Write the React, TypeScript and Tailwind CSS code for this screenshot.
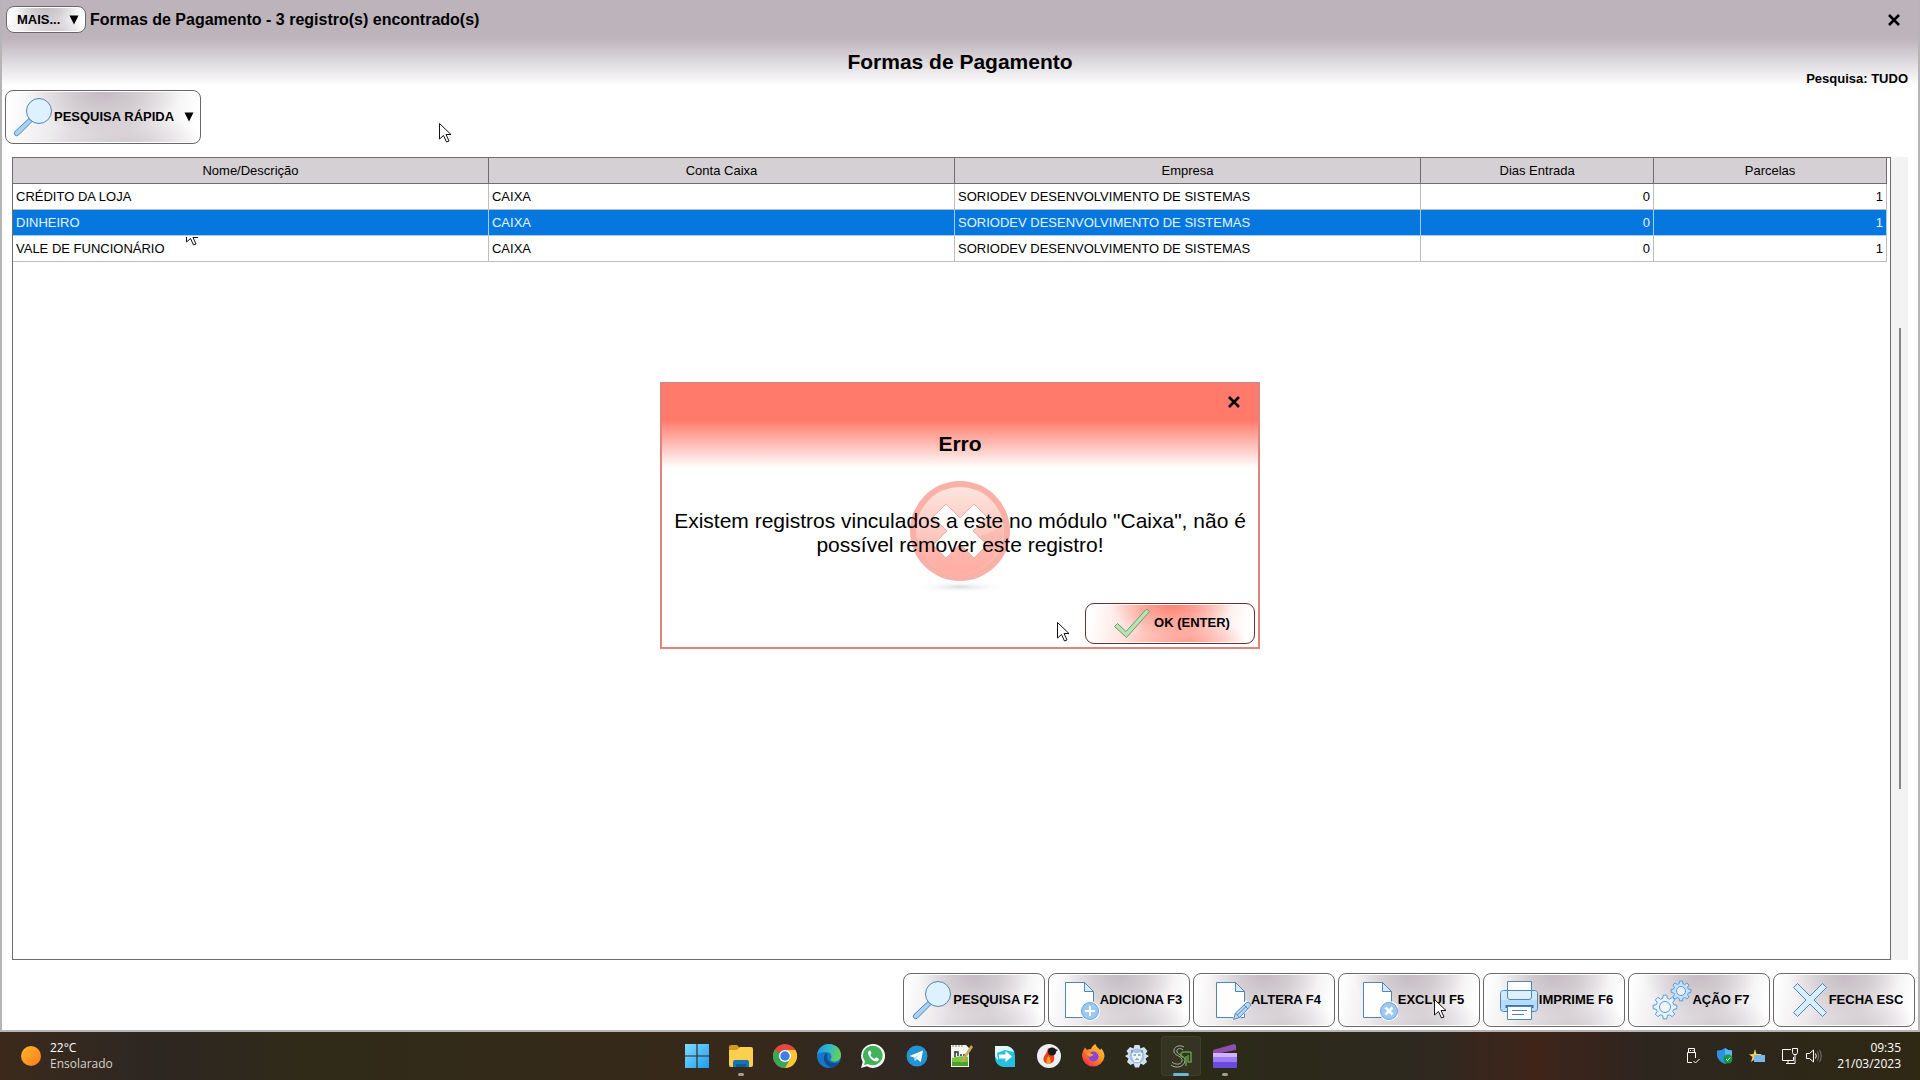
import type { ReactNode } from 'react'
import clsx from 'clsx'

const columns = [
  { label: 'Nome/Descrição', width: 'w-[25.4%]' },
  { label: 'Conta Caixa', width: 'w-[24.87%]' },
  { label: 'Empresa', width: 'w-[24.87%]' },
  { label: 'Dias Entrada', width: 'w-[12.43%]' },
  { label: 'Parcelas', width: 'w-[12.43%]' },
]

const rows = [
  { nome: 'CRÉDITO DA LOJA', conta: 'CAIXA', empresa: 'SORIODEV DESENVOLVIMENTO DE SISTEMAS', dias: 0, parcelas: 1 },
  { nome: 'DINHEIRO', conta: 'CAIXA', empresa: 'SORIODEV DESENVOLVIMENTO DE SISTEMAS', dias: 0, parcelas: 1, selected: true },
  { nome: 'VALE DE FUNCIONÁRIO', conta: 'CAIXA', empresa: 'SORIODEV DESENVOLVIMENTO DE SISTEMAS', dias: 0, parcelas: 1 },
]

const grayButton =
  'border border-[#6b666a] bg-white bg-[radial-gradient(ellipse_40%_85%_at_50%_0%,#c3bbc1,transparent),radial-gradient(ellipse_40%_60%_at_62%_100%,#d3cdd2,transparent),linear-gradient(100deg,#ffffff_2%,#e6e2e5_35%,#e3dfe2_62%,#ffffff_96%)] shadow-[inset_0_0_0_1px_#ffffff]'

// Closed outline of a gear: eight teeth around (cx, cy)
function gearPath(cx: number, cy: number, outer: number, inner: number) {
  const points: string[] = []
  const teeth = 8
  for (let i = 0; i < teeth; i++) {
    const base = (i / teeth) * Math.PI * 2
    const steps = [
      [-0.26, inner],
      [-0.15, outer],
      [0.15, outer],
      [0.26, inner],
    ]
    steps.forEach(([offset, r]) => {
      const a = base + offset
      points.push(`${(cx + Math.cos(a) * r).toFixed(2)} ${(cy + Math.sin(a) * r).toFixed(2)}`)
    })
  }
  return `M${points.join('L')}Z`
}

/* ---------- Toolbar icons ---------- */

function Icon({ children }: { children: ReactNode }) {
  return (
    <svg viewBox="0 0 44 44" className="size-11 shrink-0" fill="none" stroke="#4f86b8" strokeWidth="1" aria-hidden="true">
      {children}
    </svg>
  )
}

function SearchIcon() {
  return (
    <Icon>
      <path d="M19 23.500L22 26.500L8.500 40Q6.500 41.500 5 40Q3.500 38.500 5 36.500Z" fill="#a9d0f5" />
      <circle cx="29" cy="16" r="12.500" fill="#def1ff" />
    </Icon>
  )
}

function Sheet() {
  return (
    <>
      <path d="M9.500 4.500H28.500L37.500 13.500V39.500H9.500Z" fill="#fff" />
      <path d="M28.500 4.500V13.500H37.500Z" fill="#d5ebff" />
    </>
  )
}

function AddIcon() {
  return (
    <Icon>
      <Sheet />
      <circle cx="34" cy="33" r="10" fill="#fff" stroke="none" />
      <circle cx="34" cy="33" r="8.500" fill="#9cc8f4" stroke="#6ba3dc" />
      <path d="M34 28V38M29 33H39" stroke="#fff" strokeWidth="2" />
    </Icon>
  )
}

function EditIcon() {
  return (
    <Icon>
      <Sheet />
      <path d="M25 43L28 34L39 22L45 28L33 40Z" fill="#fff" stroke="none" />
      <path d="M26.500 41.500L28.500 35L39.500 24.500Q41.500 23.500 43 25.500Q44 27 43 28.500L32.500 39.500Z" fill="#b5d9fb" />
      <path d="M28.500 35L32.500 39.500M37 27L41 31M30.500 37L39.500 28" />
    </Icon>
  )
}

function DeleteIcon() {
  return (
    <Icon>
      <Sheet />
      <circle cx="35" cy="33" r="10" fill="#fff" stroke="none" />
      <circle cx="35" cy="33" r="8.500" fill="#9cc8f4" stroke="#6ba3dc" />
      <path d="M31.500 29.500L38.500 36.500M38.500 29.500L31.500 36.500" stroke="#fff" strokeWidth="2.500" />
    </Icon>
  )
}

function PrintIcon() {
  return (
    <Icon>
      <path d="M12.500 3.500H36.500V14H12.500Z" fill="#fff" />
      <rect x="5.500" y="12.500" width="37" height="21" rx="3" fill="#b7dcfb" />
      <path d="M6 15Q6 13 8.500 13H39.500Q42 13 42 15V22H6Z" fill="#cfe8fd" stroke="none" />
      <path d="M12.500 12.500H36.500V19Q36.500 21.500 34 21.500H15Q12.500 21.500 12.500 19Z" fill="#dff1ff" />
      <path d="M10.500 28.500H38.500" stroke="#3d74a8" strokeWidth="3" />
      <path d="M12.500 28.500H36.500V41.500H12.500Z" fill="#fff" />
      <path d="M17 32.500H32M17 36.500H29" />
    </Icon>
  )
}

function GearsIcon() {
  return (
    <Icon>
      <path d={gearPath(17, 29, 12, 9)} fill="#e3f3ff" stroke="#5a9bd5" />
      <circle cx="17" cy="29" r="5.500" fill="#f3f3f6" stroke="#5a9bd5" />
      <path d={gearPath(33, 13, 10, 7.5)} fill="#c4e2fb" stroke="#5a9bd5" />
      <circle cx="33" cy="13" r="4.500" fill="#eeedf1" stroke="#5a9bd5" />
    </Icon>
  )
}

function CloseIcon() {
  return (
    <Icon>
      <path
        d="M12.500 5.500L25 18L37.500 5.500L41.500 9.500L29 22L41.500 34.500L37.500 38.500L25 26L12.500 38.500L8.500 34.500L21 22L8.500 9.500Z"
        fill="#d9efff"
      />
    </Icon>
  )
}

function CheckIcon() {
  return (
    <Icon>
      <path d="M4.500 25.500L7.500 22.500L16 30.500L36 8.500Q38 8 39.500 10.500L16.500 36.500Z" fill="#b9e3b5" stroke="#6d9a6d" />
    </Icon>
  )
}

function CrossMark() {
  return (
    <svg viewBox="0 0 12 12" className="size-3" fill="none" stroke="#000" strokeWidth="2.500" aria-hidden="true">
      <path d="M1 1L11 11M11 1L1 11" />
    </svg>
  )
}

function Caret() {
  return (
    <svg viewBox="0 0 10 10" className="size-2.5 shrink-0" aria-hidden="true">
      <path d="M.5 .5H9.500L5 9.500Z" fill="#000" />
    </svg>
  )
}

function Pointer({ className }: { className: string }) {
  return (
    <svg viewBox="0 0 13 20" className={clsx('pointer-events-none absolute h-5 w-[13px]', className)} aria-hidden="true">
      <path d="M.5 .5V16L4.500 12.500L7.500 19L10 18L7 11.500H12Z" fill="#fff" stroke="#111" />
    </svg>
  )
}

const actions = [
  { label: 'PESQUISA F2', icon: <SearchIcon /> },
  { label: 'ADICIONA F3', icon: <AddIcon /> },
  { label: 'ALTERA F4', icon: <EditIcon /> },
  { label: 'EXCLUI F5', icon: <DeleteIcon /> },
  { label: 'IMPRIME F6', icon: <PrintIcon /> },
  { label: 'AÇÃO F7', icon: <GearsIcon /> },
  { label: 'FECHA ESC', icon: <CloseIcon /> },
]

/* ---------- Taskbar icons ---------- */

const taskbarApps = [
  {
    name: 'Iniciar',
    art: (
      <>
        <linearGradient id="win" x1="0" y1="0" x2="1" y2="1">
          <stop offset="0" stopColor="#7fdcff" />
          <stop offset="1" stopColor="#1b9df0" />
        </linearGradient>
        <path d="M0 0H11.400V11.400H0ZM12.600 0H24V11.400H12.600ZM0 12.600H11.400V24H0ZM12.600 12.600H24V24H12.600Z" fill="url(#win)" />
      </>
    ),
  },
  {
    name: 'Explorador de Arquivos',
    running: true,
    art: (
      <>
        <path d="M0 3Q0 1 2 1H8L11 4H22V8H0Z" fill="#d99a1b" />
        <path d="M0 6H8L11 3H22Q24 3 24 5V21Q24 23 22 23H2Q0 23 0 21Z" fill="#fbd04f" />
        <path d="M4 23V18Q4 16 6 16H18Q20 16 20 18V23Z" fill="#1673b8" />
        <path d="M7 23V20H17V23Z" fill="#0f5a94" />
      </>
    ),
  },
  {
    name: 'Chrome',
    art: (
      <>
        <circle cx="12" cy="12" r="12" fill="#e24a3b" />
        <path d="M12 12L1.600 6A12 12 0 0 0 12 24L17.200 15Z" fill="#3aa757" />
        <path d="M12 24A12 12 0 0 0 22.400 6H12L17.200 15Z" fill="#fbc72e" />
        <circle cx="12" cy="12" r="6" fill="#fff" />
        <circle cx="12" cy="12" r="4.700" fill="#3f7de8" />
      </>
    ),
  },
  {
    name: 'Edge',
    art: (
      <>
        <linearGradient id="edge" x1="0" y1="0" x2="1" y2="0.3">
          <stop offset="0" stopColor="#1e8fdc" />
          <stop offset="0.5" stopColor="#2fb7cf" />
          <stop offset="1" stopColor="#63cf5c" />
        </linearGradient>
        <circle cx="12" cy="12" r="12" fill="#1777c8" />
        <path d="M0 11C1 4 6 0 12 0C19 0 24 5 24 11C24 15 21 17.500 17.500 17.500C14 17.500 13 16 14 14.500C16 11.500 13 8 9 8C5 8 1 9 0 11Z" fill="url(#edge)" />
        <path d="M8.500 9.500C5 13 7 21 14 23.500C18 23.500 21 21 22.500 18C17 21 10 18 10 13Q10 11 11 9.500Z" fill="#124c8c" />
      </>
    ),
  },
  {
    name: 'WhatsApp',
    art: (
      <>
        <path d="M0 24L1.700 18A12 12 0 1 1 6 22.300Z" fill="#f4f8f4" />
        <path d="M3 21L4 17.400A9.800 9.800 0 1 1 7 20Z" fill="#41b25b" />
        <path d="M8.500 6.500C7 7 6.500 9 7.500 11C9 14.500 12 17 15 17.500C17 17.500 18 16 17.800 14.700L15 13.300L13.500 15C11.500 14 10 12.500 9.300 10.800L10.500 9.500L9.500 6.700Z" fill="#fff" />
      </>
    ),
  },
  {
    name: 'Telegram',
    art: (
      <>
        <circle cx="12" cy="12" r="10.500" fill="#2494d4" />
        <path d="M4.500 12L18 6.500L15.800 18L11.800 15L9.800 17L9.500 13.800Z" fill="#fff" />
        <path d="M9.500 13.800L15.500 9.500L11 14.500L9.800 17Z" fill="#b7d7ec" />
      </>
    ),
  },
  {
    name: 'Notepad++',
    art: (
      <>
        <path d="M2 1H17L20 4V23H2Z" fill="#f2f4ee" />
        <path d="M3 14Q11 11 19 13V22H3Z" fill="#7cc444" />
        <path d="M3 18H19V22H3Z" fill="#4da02a" />
        <path d="M6 13V7M6 8H9V12M12 10V12M15 10V12" fill="none" stroke="#333" strokeWidth="1.500" />
        <path d="M22 1L24 3L15 17L12 19L13 15Z" fill="#c7a95a" />
        <path d="M4 1V3M7 1V3M10 1V3M13 1V3" stroke="#888" />
      </>
    ),
  },
  {
    name: 'Suporte remoto',
    art: (
      <>
        <path d="M2 2H14Q22 4 22 12V23H10Q2 21 2 13Z" fill="#27c0de" />
        <path d="M2 2H14Q19 3 21 8L12 6L4 9L5 16Q2 14 2 10Z" fill="#dff8fc" />
        <path d="M6 10.500H12.500V7L19 12.500L12.500 18V14.500H6Z" fill="#fff" />
      </>
    ),
  },
  {
    name: 'Gravador',
    art: (
      <>
        <circle cx="12" cy="12" r="12" fill="#eceef0" />
        <path d="M11 4C16 8 18 12 17 16C16 21 7 21 6.500 16C6 12 10 10 11 4Z" fill="#e8401c" />
        <path d="M11.500 12C14 15 15 20 11.500 20C8.500 20 9 15 11.500 12Z" fill="#ffa31f" />
        <circle cx="15" cy="7.500" r="4" fill="#181818" />
        <path d="M18 5L21 6L18.500 8Z" fill="#181818" />
      </>
    ),
  },
  {
    name: 'Firefox',
    art: (
      <>
        <linearGradient id="fox" x1="1" y1="0" x2="0.2" y2="1">
          <stop offset="0" stopColor="#ffd83d" />
          <stop offset="0.5" stopColor="#ff9126" />
          <stop offset="1" stopColor="#f5264e" />
        </linearGradient>
        <path d="M1 12C1 8 3 5 4 3.500L6 6C7 5 9 5 10 5C11 2 13 1 14.500 0C15 3 18 4 19 6L20.500 4.500C22.500 7 23.500 10 23.500 12.500A11.300 11.300 0 0 1 1 12Z" fill="url(#fox)" />
        <circle cx="12.500" cy="12.500" r="5" fill="#8a45d6" />
        <path d="M5 9C8 8 10 10 12.500 10.500C11.500 12.500 9.500 12 8.500 13Z" fill="#ff9c2b" />
      </>
    ),
  },
  {
    name: 'Banco de dados',
    art: (
      <>
        <path
          d="M9.500 1H14.500L15.500 4.500L19 3L22.500 7L20.500 10L24 12L20.500 14.500L22 18L18.500 21L15.500 19.500L14 23.500H10L8.500 19.500L5.500 21L2 18L3.500 14.500L0 12L3.500 10L1.500 7L5 3L8.500 4.500Z"
          fill="#d3e2f2"
        />
        <circle cx="12" cy="12" r="7.500" fill="#a3c0e0" />
        <path d="M7 7L10 9H14L17 7L17 13L14.500 18H9.500L7 13Z" fill="#eaf2fa" />
        <path d="M8.500 11H11M13 11H15.500M10.500 16L12 14.500L13.500 16M7 6V9M17 6V9" stroke="#3c6292" fill="none" />
      </>
    ),
  },
  {
    name: 'SorioDev',
    active: true,
    art: (
      <>
        <path
          d="M15 3C10 0 4 3 5 8C6 12 14 12 13 17C12 21 6 21 3 18M14 6C11 3 7 5 8 8C9 11 17 12 16 17C15 23 7 25 2 21"
          fill="none"
          stroke="#a9b3a4"
        />
        <path d="M22 8H14C10 10 12 14 15 13M17 12V22M22 8V18H19V11" fill="none" stroke="#5f9c45" strokeWidth="1.500" />
      </>
    ),
  },
  {
    name: 'Clipchamp',
    running: true,
    art: (
      <>
        <path d="M0 6L21 0Q23 0 23 2V6L2 10H0Z" fill="#8b4fae" />
        <path d="M0 9H24V22Q24 24 22 24H2Q0 24 0 22Z" fill="#9b7cf5" />
        <path d="M0 9H24V13H0Z" fill="#d3b1fb" />
        <path d="M0 18H24V22Q24 24 22 24H2Q0 24 0 22Z" fill="#6a4be0" />
      </>
    ),
  },
]

function Taskbar() {
  return (
    <footer className="grid h-12 shrink-0 grid-cols-[1fr_auto_1fr] items-center bg-[linear-gradient(to_right,#3b2a1c_0%,#2d2722_8%,#2f2a19_15%,#37291a_38%,#2f2822_48%,#2b2a17_62%,#2e2920_74%,#3f241a_80%,#2c261f_86%,#2f2813_100%)] font-['Open_Sans','Noto_Sans',sans-serif] text-xs text-white">
      <button type="button" className="ml-[21px] flex items-center gap-[9px] justify-self-start text-left leading-4">
        <span className="size-5 rounded-full bg-linear-to-br from-[#ffb62e] to-[#ff7a16]" />
        <span>
          22°C
          <span className="block text-[#d6d2cc]">Ensolarado</span>
        </span>
      </button>

      <nav className="flex pl-0.5">
        {taskbarApps.map((app) => (
          <button key={app.name} type="button" aria-label={app.name} className="relative flex h-12 w-11 items-center justify-center">
            {app.active && <span className="absolute inset-x-[2px] inset-y-1 rounded border border-white/5 bg-white/5" />}
            <svg viewBox="0 0 24 24" className="relative size-6">
              {app.art}
            </svg>
            {app.running && <span className="absolute bottom-1 h-[3px] w-1.5 rounded-full bg-[#a39d96]" />}
            {app.active && <span className="absolute bottom-1 h-[3px] w-4 rounded-full bg-[#6ab8de]" />}
          </button>
        ))}
      </nav>

      <div className="mr-[19px] flex items-center justify-self-end">
        <svg viewBox="0 0 16 18" className="mr-4 h-[18px] w-4" fill="none" stroke="#fff" aria-hidden="true">
          <path d="M3.500 5.500V1.500H9.500V5.500M5 3.500H6M7.500 3.500H8.500M7 15.500H2.500V5.500H10.500V11M8.500 14L10.500 16L14.500 12" />
        </svg>
        <svg viewBox="0 0 16 18" className="mr-4 h-[18px] w-4" aria-hidden="true">
          <path d="M8 1Q11 3.500 15 3.500V9Q14 14 8 17Q1 14 0 9V3.500Q5 3.500 8 1Z" fill="#2f8fe0" />
          <path d="M8 1Q11 3.500 15 3.500V9H8Z" fill="#58b7f2" />
          <circle cx="11" cy="12" r="4.500" fill="#0f9a3f" />
          <path d="M9 12L10.500 13.500L13.200 10.500" fill="none" stroke="#fff" />
        </svg>
        <svg viewBox="0 0 16 18" className="mr-4 h-[18px] w-4" aria-hidden="true">
          <path d="M6 2L7.500 7L13 7L9 10L9 14L6 12L2 15L3.500 10L0 7.500L4.500 7Z" fill="#f7d257" />
          <path d="M5 8H16V15H5Z" fill="#74b9f0" />
        </svg>
        <svg viewBox="0 0 18 18" className="mr-1.5 size-[18px]" fill="none" stroke="#fff" aria-hidden="true">
          <path d="M10 2.500H1.500V13.500H12.500V10M5 16.500H12M7 14V16M11.500 1.500H16.500V5.500L15.500 7.500H12.500L11.500 5.500ZM14 8V16.500H12" />
        </svg>
        <svg viewBox="0 0 18 18" className="mr-3.5 size-[18px]" fill="none" stroke="#fff" aria-hidden="true">
          <path d="M1.500 6.500H4.500L8.500 3V15L4.500 11.500H1.500ZM10.500 6.500Q12 9 10.500 11.500" />
          <path d="M12.500 4.500Q15 9 12.500 13.500M14.500 3Q18 9 14.500 15" stroke="#7b756d" />
        </svg>
        <button type="button" className="text-right leading-4">
          09:35
          <span className="block">21/03/2023</span>
        </button>
      </div>
    </footer>
  )
}

function ErrorDialog() {
  return (
    <div
      role="alertdialog"
      aria-labelledby="erro-titulo"
      aria-describedby="erro-texto"
      className="pointer-events-auto relative flex h-[267px] w-[600px] flex-col border-2 border-[#e0847d] bg-[linear-gradient(to_bottom,#ff7a6a_0,#ff7a6a_36px,#ffffff_84px)]"
    >
      <button type="button" aria-label="Fechar" className="mt-3 mr-[18px] self-end">
        <CrossMark />
      </button>
      <h2 id="erro-titulo" className="mt-6 text-center text-[21px] leading-6 font-bold">
        Erro
      </h2>

      <svg viewBox="0 0 110 116" className="absolute top-24 left-1/2 h-[116px] w-[110px] -translate-x-1/2" aria-hidden="true">
        <linearGradient id="err-disc" x1="0" y1="0" x2="0" y2="1">
          <stop offset="0" stopColor="#fde4de" />
          <stop offset="0.55" stopColor="#fbc8bf" />
          <stop offset="1" stopColor="#ffb0a7" />
        </linearGradient>
        <radialGradient id="err-shadow">
          <stop offset="0" stopColor="#d9dde0" />
          <stop offset="1" stopColor="#ffffff" stopOpacity="0" />
        </radialGradient>
        <ellipse cx="55" cy="107" rx="50" ry="6" fill="url(#err-shadow)" />
        <circle cx="55" cy="51" r="50" fill="#f8b0a7" />
        <circle cx="55" cy="51" r="44" fill="url(#err-disc)" />
        <path d="M11 58Q55 70 98 46A44 44 0 0 1 11 58Z" fill="#ffa79c" opacity="0.400" />
        <path
          d="M41 24L55 38L69 24L82 37L68 51L82 65L69 78L55 64L41 78L28 65L42 51L28 37Z"
          fill="#fff"
          stroke="#eeb0a8"
        />
      </svg>

      <p id="erro-texto" className="relative mt-[53px] px-2 text-center text-[21px] leading-6">
        Existem registros vinculados a este no módulo "Caixa", não é possível remover este registro!
      </p>

      <button
        type="button"
        className="mt-auto mr-[3px] mb-[3px] flex h-[41px] w-[170px] items-center justify-center self-end rounded-[9px] border border-[#6d2f2a] bg-white bg-[radial-gradient(ellipse_36%_85%_at_51%_0%,#ff7f6e,transparent),radial-gradient(ellipse_36%_70%_at_60%_100%,#ff9d90,transparent),linear-gradient(100deg,#ffffff_4%,#ffd2cc_36%,#ffd2cc_62%,#ffffff_94%)] text-[13px] font-bold shadow-[inset_0_0_0_1px_#ffffff]"
      >
        <CheckIcon />
        OK (ENTER)
      </button>
    </div>
  )
}

export default function App() {
  return (
    <div className="flex min-h-screen flex-col font-['Liberation_Sans',Arial,sans-serif] text-black">
      <main className="relative flex flex-1 flex-col border-x-2 border-b-2 border-[#b7b4b6] bg-[linear-gradient(to_bottom,#bcb3bb_0,#bcb3bb_38px,#ffffff_86px)]">
        {/* Title bar */}
        <header className="flex h-[39px] items-center gap-1 pr-[18px] pl-1">
          <button
            type="button"
            className={clsx('flex h-[27px] w-20 items-center justify-between rounded-lg pr-1.5 pl-2.5 text-[13px] font-bold', grayButton)}
          >
            MAIS...
            <Caret />
          </button>
          <span className="text-base font-bold">Formas de Pagamento - 3 registro(s) encontrado(s)</span>
          <button type="button" aria-label="Fechar" className="ml-auto">
            <CrossMark />
          </button>
        </header>

        <div className="grid h-[49px] grid-cols-[1fr_auto_1fr] px-2.5">
          <h1 className="col-start-2 text-[21px] leading-[46px] font-bold">Formas de Pagamento</h1>
          <p className="self-end justify-self-end text-[13px] leading-[18px] font-bold">Pesquisa: TUDO</p>
        </div>

        <div className="mt-0.5 flex px-[3px]">
          <button
            type="button"
            className={clsx('flex h-[54px] w-[196px] items-center rounded-lg pr-1.5 pl-1 text-[13px] font-bold', grayButton)}
          >
            <SearchIcon />
            PESQUISA RÁPIDA
            <span className="ml-auto">
              <Caret />
            </span>
          </button>
        </div>

        {/* Records */}
        <div className="mx-2.5 mt-[13px] flex flex-1">
          <div className="flex-1 border border-[#6f6d6f] bg-white pr-[3px]">
            <table className="w-full table-fixed border-separate border-spacing-0 text-[13px] leading-[25px]">
              <thead>
                <tr className="bg-[#d5d0d4]">
                  {columns.map((col) => (
                    <th key={col.label} scope="col" className={clsx('border-r border-b border-[#6f6d6f] p-0 font-normal', col.width)}>
                      {col.label}
                    </th>
                  ))}
                </tr>
              </thead>
              <tbody>
                {rows.map((row) => (
                  <tr
                    key={row.nome}
                    aria-selected={row.selected}
                    className={clsx(
                      '*:border-r *:border-b *:px-[3px] *:py-0',
                      row.selected ? 'bg-[#0677de] text-[#e2f6ff] *:border-[#9fd0f5]' : '*:border-[#bdbdbd]',
                    )}
                  >
                    <td>{row.nome}</td>
                    <td>{row.conta}</td>
                    <td>{row.empresa}</td>
                    <td className="text-right">{row.dias}</td>
                    <td className="text-right">{row.parcelas}</td>
                  </tr>
                ))}
              </tbody>
            </table>
          </div>
          <div className="flex w-[17px] flex-col items-center bg-[#f3f3f3]">
            <div className="grow-[171]" />
            <div className="w-0.5 grow-[461] bg-[#858585]" />
            <div className="grow-[171]" />
          </div>
        </div>

        <div className="mt-[13px] mb-[3px] flex justify-end gap-[3px] pr-[3px]">
          {actions.map((action) => (
            <button
              key={action.label}
              type="button"
              className={clsx('flex h-[54px] w-[142px] items-center justify-center rounded-lg text-[13px] font-bold whitespace-nowrap', grayButton)}
            >
              {action.icon}
              {action.label}
            </button>
          ))}
        </div>

        <div className="pointer-events-none absolute inset-0 flex items-center justify-center">
          <ErrorDialog />
        </div>

        <Pointer className="top-[123px] left-[437px]" />
        <Pointer className="top-[622px] left-[1055px]" />
        <Pointer className="top-[999px] left-[1432px]" />
        {/* Lower part of a pointer, cut by the selected row */}
        <svg viewBox="0 0 13 9" className="pointer-events-none absolute top-[237px] left-[184px] h-[9px] w-[13px]" aria-hidden="true">
          <path d="M.5 0V5L4.500 1.500L7.500 8L10 7L7 .5H12" fill="#fff" stroke="#111" />
        </svg>
      </main>

      <Taskbar />
    </div>
  )
}
